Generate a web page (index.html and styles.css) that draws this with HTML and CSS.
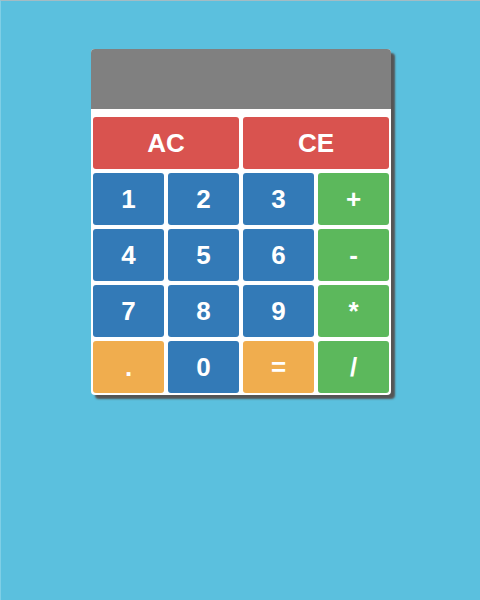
FILE: index.html
```html
<!DOCTYPE html>
<html>
<head>
<meta charset="utf-8">
<link rel="stylesheet" href="styles.css">
</head>
<body>
<div class="calc">
  <div class="display"></div>
  <div class="keys">
    <button class="key red wide">AC</button>
    <button class="key red wide">CE</button>
    <button class="key blue">1</button>
    <button class="key blue">2</button>
    <button class="key blue">3</button>
    <button class="key green">+</button>
    <button class="key blue">4</button>
    <button class="key blue">5</button>
    <button class="key blue">6</button>
    <button class="key green">-</button>
    <button class="key blue">7</button>
    <button class="key blue">8</button>
    <button class="key blue">9</button>
    <button class="key green">*</button>
    <button class="key orange">.</button>
    <button class="key blue">0</button>
    <button class="key orange">=</button>
    <button class="key green">/</button>
  </div>
</div>
</body>
</html>
```

FILE: styles.css
```css
html, body {
  margin: 0;
  padding: 0;
}
body {
  width: 480px;
  height: 600px;
  background: #5bc0de;
  font-family: "Liberation Sans", Arial, sans-serif;
  padding-top: 48px;
  box-sizing: border-box;
  border-top: 1px solid #a4bcc4;
  border-left: 1px solid #7fcfe6;
}
.calc {
  width: 300px;
  margin-left: 90px;
  background: #fff;
  border-radius: 4px;
  box-shadow: 4px 4px 2px #555;
}
.display {
  height: 60px;
  background: #808080;
  border-radius: 4px 4px 0 0;
}
.keys {
  display: grid;
  grid-template-columns: repeat(4, 71px);
  column-gap: 4px;
  row-gap: 4px;
  padding: 8px 2px 2px 2px;
}
.key {
  height: 52px;
  border: none;
  border-radius: 3px;
  color: #fff;
  font-family: "Liberation Sans", Arial, sans-serif;
  font-weight: bold;
  font-size: 26px;
  padding: 0;
  margin: 0;
}
.wide { grid-column: span 2; }
.red { background: #d9534f; }
.blue { background: #337ab7; }
.green { background: #5cb85c; }
.orange { background: #f0ad4e; }
```
